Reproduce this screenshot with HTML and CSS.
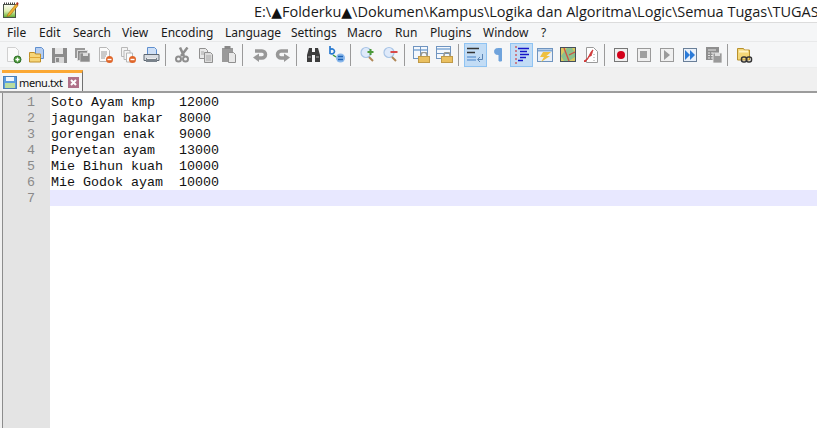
FILE: index.html
```html
<!DOCTYPE html>
<html lang="en">
<head>
<meta charset="utf-8">
<title>menu.txt - Notepad++</title>
<link rel="stylesheet" href="styles.css">
</head>
<body>
<svg class="defs" width="0" height="0" aria-hidden="true">
  <defs>
    <symbol id="lock" viewBox="0 0 12 11">
      <path d="M3 5V3.200a3 3 0 0 1 6 0V5" fill="none" stroke="#9a9a90" stroke-width="1.600"/>
      <rect x=".5" y="4.500" width="11" height="6" fill="#eac060" stroke="#c09a48"/>
    </symbol>
    <linearGradient id="padfill" x1="0" y1="0" x2="0" y2="1">
      <stop offset="0" stop-color="#fafbf2"/>
      <stop offset=".5" stop-color="#dfeeb0"/>
      <stop offset="1" stop-color="#5fae2e"/>
    </linearGradient>
  </defs>
</svg>
<div class="window">
  <header class="titlebar">
    <svg class="appicon" width="18" height="18" viewBox="0 0 18 18">
      <rect x="2.500" y="3.500" width="12" height="13" fill="url(#padfill)" stroke="#4a5548"/>
      <path d="M3 2.500h11" stroke="#444" stroke-dasharray="1 1" stroke-width="2"/>
      <path d="M7 13 15 3l2 1.500-8 10-3 1z" fill="#eeb030" stroke="#a06a10" stroke-width=".6"/>
      <path d="M15 3l1-2 1.500 1-.5 2.500z" fill="#b03020"/>
    </svg>
    <span class="titletext">E:\<span class="tri-glyph">▲</span>Folderku<span class="tri-glyph">▲</span>\Dokumen\Kampus\Logika dan Algoritma\Logic\Semua Tugas\TUGAS</span>
  </header>
  <nav class="menubar">
    <span class="mi m-file">File</span><span class="mi m-edit">Edit</span><span class="mi m-search">Search</span><span class="mi m-view">View</span><span class="mi m-enc">Encoding</span><span class="mi m-lang">Language</span><span class="mi m-set">Settings</span><span class="mi m-mac">Macro</span><span class="mi m-run">Run</span><span class="mi m-plug">Plugins</span><span class="mi m-win">Window</span><span class="mi">?</span>
  </nav>
  <div class="toolbar">
    <span class="btn"><svg width="17" height="18" viewBox="0 0 17 18"><path d="M2.500 1.500h8l3 3v11h-11z" fill="#fbfbfb" stroke="#d0d0d0"/><circle cx="12.500" cy="13.500" r="3.500" fill="#4c9a3a" stroke="#2f6f28"/><path d="M10.500 13.500h4M12.500 11.500v4" stroke="#fff" stroke-width="1.300"/></svg></span>
    <span class="btn"><svg width="17" height="18" viewBox="0 0 17 18"><path d="M7.500 1.500h6l2 2v9h-8z" fill="#b5cdf0" stroke="#5f8fcf"/><path d="M1.500 6.500h5l1 1.500h5v8h-11z" fill="#f6d67a" stroke="#c08f28"/><path d="M1.500 11.500h11" stroke="#e0a838"/></svg></span>
    <span class="btn"><svg width="17" height="18" viewBox="0 0 17 18"><path d="M1 2h15v15H1z" fill="#8c8c8c"/><rect x="4" y="2" width="8" height="6" fill="#e6e6e6"/><rect x="4" y="11" width="9" height="6" fill="#d8d8d8"/><rect x="5" y="12" width="3" height="4" fill="#8c8c8c"/></svg></span>
    <span class="btn"><svg width="17" height="16" viewBox="0 0 17 16"><path d="M1 1h10v10H1z" fill="#9a9a9a"/><path d="M3.500 3.500h10v10h-10z" fill="#8a8a8a" stroke="#ddd"/><path d="M6 6h10v9H6z" fill="#8c8c8c" stroke="#eee" stroke-width=".6"/><rect x="9" y="6" width="5" height="3" fill="#ddd"/></svg></span>
    <span class="btn"><svg width="17" height="18" viewBox="0 0 17 18"><path d="M2.500 1.500h7l3 3v11h-10z" fill="#fbfbfb" stroke="#b8b8b8"/><path d="M4 6h6M4 8h6M4 10h5M4 12h4" stroke="#999"/><circle cx="12.500" cy="13.500" r="3.500" fill="#e0662a"/><path d="M10.500 13.500h4" stroke="#fff" stroke-width="1.400"/></svg></span>
    <span class="btn"><svg width="17" height="18" viewBox="0 0 17 18"><path d="M1.500 1.500h6v9h-6z" fill="#f4f4f4" stroke="#b8b8b8"/><path d="M4 4.500h6v9H4z" fill="#f4f4f4" stroke="#b8b8b8"/><path d="M6.500 7h6v9h-6z" fill="#fbfbfb" stroke="#b8b8b8"/><circle cx="12.500" cy="13.500" r="3.500" fill="#e0662a"/><path d="M10.500 13.500h4" stroke="#fff" stroke-width="1.400"/></svg></span>
    <span class="btn"><svg width="17" height="16" viewBox="0 0 17 16"><path d="M4.500.5h7l2 2v5h-9z" fill="#cfe0f6" stroke="#5f8fcf"/><path d="M1 7.500h15v6H1z" fill="#d9dde2" stroke="#5e6873"/><rect x="3" y="11" width="11" height="4" fill="#7a838c"/><rect x="4" y="11" width="9" height="1" fill="#eee"/></svg></span>
    <span class="sep"></span>
    <span class="btn"><svg width="15" height="16" viewBox="0 0 15 16"><path d="M12.500.5 6 9M5 .5 9 9" stroke="#8e8e8e" stroke-width="2.500" fill="none"/><circle cx="3.500" cy="12" r="2.500" fill="none" stroke="#8e8e8e" stroke-width="2"/><circle cx="10.500" cy="12" r="2.500" fill="none" stroke="#8e8e8e" stroke-width="2"/></svg></span>
    <span class="btn"><svg width="16" height="16" viewBox="0 0 16 16"><path d="M1.500 1.500h6l2 2v8h-8z" fill="#e8e8e8" stroke="#909090"/><path d="M6.500 5.500h6l2 2v8h-8z" fill="#dcdcdc" stroke="#909090"/><path d="M3 5h3M3 7h3M8 9h5M8 11h5M8 13h5" stroke="#a8a8a8"/></svg></span>
    <span class="btn"><svg width="16" height="17" viewBox="0 0 16 17"><path d="M1 2h11v14H1z" fill="#9a9a9a"/><rect x="3.500" y="0" width="6" height="3" fill="#888"/><path d="M7.500 6.500h5l2 2v8h-7z" fill="#e8e8e8" stroke="#909090"/></svg></span>
    <span class="sep"></span>
    <span class="btn"><svg width="16" height="15" viewBox="0 0 16 15"><path d="M3 4h7a3.500 3.500 0 0 1 0 7H5" fill="none" stroke="#989898" stroke-width="3.500"/><path d="M7 6.500V15L1 10.500z" fill="#989898"/></svg></span>
    <span class="btn"><svg width="16" height="15" viewBox="0 0 16 15"><path d="M13 4H6a3.500 3.500 0 0 0 0 7h5" fill="none" stroke="#989898" stroke-width="3.500"/><path d="M9 6.500V15l6-4.500z" fill="#989898"/></svg></span>
    <span class="sep"></span>
    <span class="btn"><svg width="15" height="14" viewBox="0 0 15 14"><path d="M3 0h3v4h3V0h3l2 7v7H9V7H6v7H1V7z" fill="#3d3d3d"/><path d="M2 9h3M10 9h3" stroke="#b0b0b0"/></svg></span>
    <span class="btn"><svg width="18" height="17" viewBox="0 0 18 17"><path d="M2 0v8M2 3.500c3-1.500 4.500 .5 4.500 2s-2 3-4.500 2" fill="none" stroke="#2a7ad0" stroke-width="1.700"/><path d="M5 9l3 2" stroke="#3a9a3a" stroke-width="1.500"/><circle cx="12.500" cy="12" r="4.500" fill="#8ab8ec"/><path d="M10 10.500h5M10 13.500h5" stroke="#1e64b8" stroke-width="1.300"/></svg></span>
    <span class="sep"></span>
    <span class="btn"><svg width="16" height="17" viewBox="0 0 16 17"><circle cx="6" cy="6.500" r="5" fill="#dfeafa" stroke="#a8c4e6" stroke-width="1.200"/><path d="M9 11l4 4" stroke="#b08858" stroke-width="2"/><path d="M10.500 3v6M7.500 6h6" stroke="#4c9a3a" stroke-width="2"/></svg></span>
    <span class="btn"><svg width="16" height="17" viewBox="0 0 16 17"><circle cx="6" cy="6.500" r="5" fill="#dfeafa" stroke="#a8c4e6" stroke-width="1.200"/><path d="M9 11l4 4" stroke="#b08858" stroke-width="2"/><path d="M7.500 6h7" stroke="#d84a4a" stroke-width="2"/></svg></span>
    <span class="sep"></span>
    <span class="btn"><svg width="17" height="17" viewBox="0 0 17 17"><rect x=".5" y=".5" width="14" height="12" fill="#f4f8fd" stroke="#6f94c0"/><path d="M1 4h13" stroke="#9dbde0" stroke-width="2"/><path d="M7.500 1v11" stroke="#6f94c0"/><use href="#lock" x="5" y="6" width="12" height="11"/></svg></span>
    <span class="btn"><svg width="17" height="17" viewBox="0 0 17 17"><rect x=".5" y=".5" width="14" height="12" fill="#f4f8fd" stroke="#6f94c0"/><path d="M1 3h13" stroke="#9dbde0" stroke-width="2"/><path d="M1 7.500h13" stroke="#6f94c0"/><use href="#lock" x="5" y="6" width="12" height="11"/></svg></span>
    <span class="sep"></span>
    <span class="btn active"><svg width="17" height="15" viewBox="0 0 17 15"><path d="M0 1.500h12M0 5.500h8" stroke="#333" stroke-width="1.300"/><path d="M0 10h9M0 13h9" stroke="#6f9ed6" stroke-width="1.500"/><path d="M15.500 7v5.500H11M13 10l-2.500 2.500L13 15" fill="none" stroke="#5b84b4"/></svg></span>
    <span class="btn"><svg width="10" height="15" viewBox="0 0 10 15"><path d="M5 1.500H3.500a3 3 0 0 0 0 6H5V14h2.500V1.500z" fill="#6fa3dc" stroke="#6fa3dc"/></svg></span>
    <span class="btn active"><svg width="14" height="18" viewBox="0 0 14 18"><path d="M1 0v18" stroke="#d02020" stroke-dasharray="2 2"/><path d="M3 2.500h11M5 5.500h7M5 8.500h9M5 11.500h6M3 14.500h5" stroke="#1414c8" stroke-width="1.600"/></svg></span>
    <span class="btn"><svg width="16" height="14" viewBox="0 0 16 14"><rect x=".5" y=".5" width="15" height="13" fill="#e9f0f8" stroke="#6f94c0"/><path d="M1 2.500h14" stroke="#80a8d4" stroke-width="2"/><path d="M6 4h8L9.500 8H13l-9 6 3-5H3z" fill="#eec040"/></svg></span>
    <span class="btn"><svg width="16" height="15" viewBox="0 0 16 15"><rect x=".5" y=".5" width="15" height="14" fill="#d8c860" stroke="#44505c"/><path d="M1 9 7 1h5l3 5v4l-6 4H4z" fill="#8cc08c"/><path d="M4 1l5 13M9 8l6-3" stroke="#d05040" stroke-width="1.300"/></svg></span>
    <span class="btn"><svg width="15" height="16" viewBox="0 0 15 16"><path d="M3.500.5h7l4 4v11h-11z" fill="#fff" stroke="#9a9a9a"/><path d="M11 7v1M11 10v1M11 13v1" stroke="#999"/><path d="M1 14c2-1 4-3 5-5 1.500-3 3-6 4-6-1 2-.5 3-2 5 1 .5 0 1-1.500 1C5.500 11 4 13 2 15z" fill="#d03838" stroke="#d03838"/></svg></span>
    <span class="sep"></span>
    <span class="btn"><span class="macro mk-dark"><i class="dot"></i></span></span>
    <span class="btn"><span class="macro mk-light"><i class="square"></i></span></span>
    <span class="btn"><span class="macro mk-light"><i class="tri"></i></span></span>
    <span class="btn"><span class="macro mk-blue"><i class="tri2"></i><i class="tri2"></i></span></span>
    <span class="btn"><svg width="16" height="16" viewBox="0 0 16 16"><rect width="13" height="13" fill="#8e8e8e"/><path d="M2 3h8M2 6h2M5 6h2M2 8.500h2M5 8.500h2M2 11h2M5 11h2" stroke="#e4e4e4"/><rect x="7" y="6" width="9" height="10" fill="#9a9a9a" stroke="#f0f0f0" stroke-width=".8"/><rect x="9" y="6" width="5" height="3" fill="#ddd"/></svg></span>
    <span class="sep"></span>
    <span class="btn"><svg width="16" height="16" viewBox="0 0 16 16"><path d="M.5 1.500h6l1 1.500h5v10H.5z" fill="#f4d878" stroke="#b8902c"/><path d="M2 4.500h9" stroke="#fff3c0" stroke-width="2"/><rect x="4.500" y="10" width="5" height="5" rx="2" fill="none" stroke="#333" stroke-width="1.500"/><rect x="9.500" y="10" width="5" height="5" rx="2" fill="none" stroke="#333" stroke-width="1.500"/></svg></span>
  </div>
  <div class="tabstrip">
    <div class="tab">
      <svg width="14" height="13" viewBox="0 0 14 13"><rect x=".5" y=".5" width="13" height="12" fill="#5a9ce0" stroke="#4a7fb8"/><rect x="3" y="1" width="8" height="4" fill="#f0f6fc"/><rect x="2" y="7" width="10" height="5" fill="#b8dca0"/></svg>
      <span class="tabname">menu.txt</span>
      <svg class="tabclose" width="11" height="11" viewBox="0 0 11 11"><rect width="11" height="11" fill="#b07088"/><path d="M3 3l5 5M8 3l-5 5" stroke="#fff" stroke-width="2"/></svg>
    </div>
  </div>
  <main class="editor">
    <div class="gutter"><span>1</span><span>2</span><span>3</span><span>4</span><span>5</span><span>6</span><span>7</span></div>
    <div class="code"><div class="line">Soto Ayam kmp   12000</div><div class="line">jagungan bakar  8000</div><div class="line">gorengan enak   9000</div><div class="line">Penyetan ayam   13000</div><div class="line">Mie Bihun kuah  10000</div><div class="line">Mie Godok ayam  10000</div><div class="line current"></div></div>
  </main>
</div>
</body>
</html>
```

FILE: styles.css
```css
* { box-sizing: border-box; }
html, body { margin: 0; height: 100%; overflow: hidden; background: #fff; }
.defs { position: absolute; }
.window { display: flex; flex-direction: column; height: 428px; width: 817px; overflow: hidden; }

.titlebar { height: 23px; flex: none; display: flex; align-items: center; background: #fff; border-bottom: 1px solid #dcdcdc; overflow: hidden; white-space: nowrap; }
.appicon { flex: none; margin: -3px 0 0 1px; }
.titletext { margin-left: 235px; font: 14.5px "Open Sans", sans-serif; color: #1a1a1a; }
.tri-glyph { font-family: "DejaVu Sans", sans-serif; font-size: 14px; color: #111; }

.menubar { height: 19px; flex: none; display: flex; align-items: center; padding-left: 7px; background: #f5f6f7; border-bottom: 1px solid #e8e9ea; font: 12px "Noto Sans", sans-serif; color: #1a1a1a; }
.mi { flex: none; }
.m-file { width: 32px; } .m-edit { width: 34px; } .m-search { width: 49px; } .m-view { width: 39px; }
.m-enc { width: 64px; } .m-lang { width: 66px; } .m-set { width: 56px; } .m-mac { width: 48px; }
.m-run { width: 35px; } .m-plug { width: 53px; } .m-win { width: 58px; }

.toolbar { height: 26px; flex: none; display: flex; align-items: center; padding-left: 2px; background: #f5f6f7; border-bottom: 1px solid #eceded; }
.btn { flex: none; width: 23px; height: 24px; display: flex; align-items: center; justify-content: center; }
.btn.active { background: #c2dcf5; border: 1px solid #8fc3f2; }
.sep { flex: none; width: 8px; height: 22px; }
.sep::before { content: ""; display: block; width: 1px; height: 100%; margin-left: 2px; background: #9a9a9a; }

.macro { width: 14px; height: 14px; margin-right: 2px; display: flex; align-items: center; justify-content: center; background: #f0f0f0; border: 1px solid #9a9a9a; }
.mk-dark { border-color: #777; }
.mk-blue { border-color: #6a7f98; background: #e8f0fa; }
.dot { width: 8px; height: 8px; border-radius: 50%; background: #d4001a; }
.square { width: 7px; height: 7px; background: #a0a0a0; }
.tri { width: 0; height: 0; border-left: 6px solid #9a9a9a; border-top: 5px solid transparent; border-bottom: 5px solid transparent; }
.tri2 { width: 0; height: 0; border-left: 5px solid #2a7ad8; border-top: 5px solid transparent; border-bottom: 5px solid transparent; }

.tabstrip { height: 25px; flex: none; padding: 2px 0 0 2px; background: #f0f0f0; border-bottom: 2px solid #9c9c9c; }
.tab { width: 81px; height: 21px; display: flex; align-items: center; padding: 1px 0 0 1px; background: #f6f6f6; border-top: 3px solid #fba834; border-right: 1px solid #707070; }
.tabname { width: 49px; margin-left: 2px; font: 11px "Noto Sans", sans-serif; letter-spacing: -.4px; color: #111; }
.tabclose { margin-left: 0; }

.editor { flex: 1; display: flex; min-height: 0; margin-left: 2px; border-left: 1px solid #8c8c8c; background: #fff; box-shadow: -2px 0 0 #f0f0f0; }
.gutter { width: 47px; flex: none; display: flex; flex-direction: column; padding-top: 1px; background: #e4e4e4; }
.gutter span { height: 16px; padding: 1px 0 0 24px; font: 13.33px/16px "Liberation Mono", monospace; color: #8a8a8a; }
.code { flex: 1; min-width: 0; padding-top: 1px; }
.line { height: 16px; padding: 1px 0 0 1px; font: 13.33px/16px "Liberation Mono", monospace; color: #111; white-space: pre; }
.line.current { background: #e8e8ff; }
```
